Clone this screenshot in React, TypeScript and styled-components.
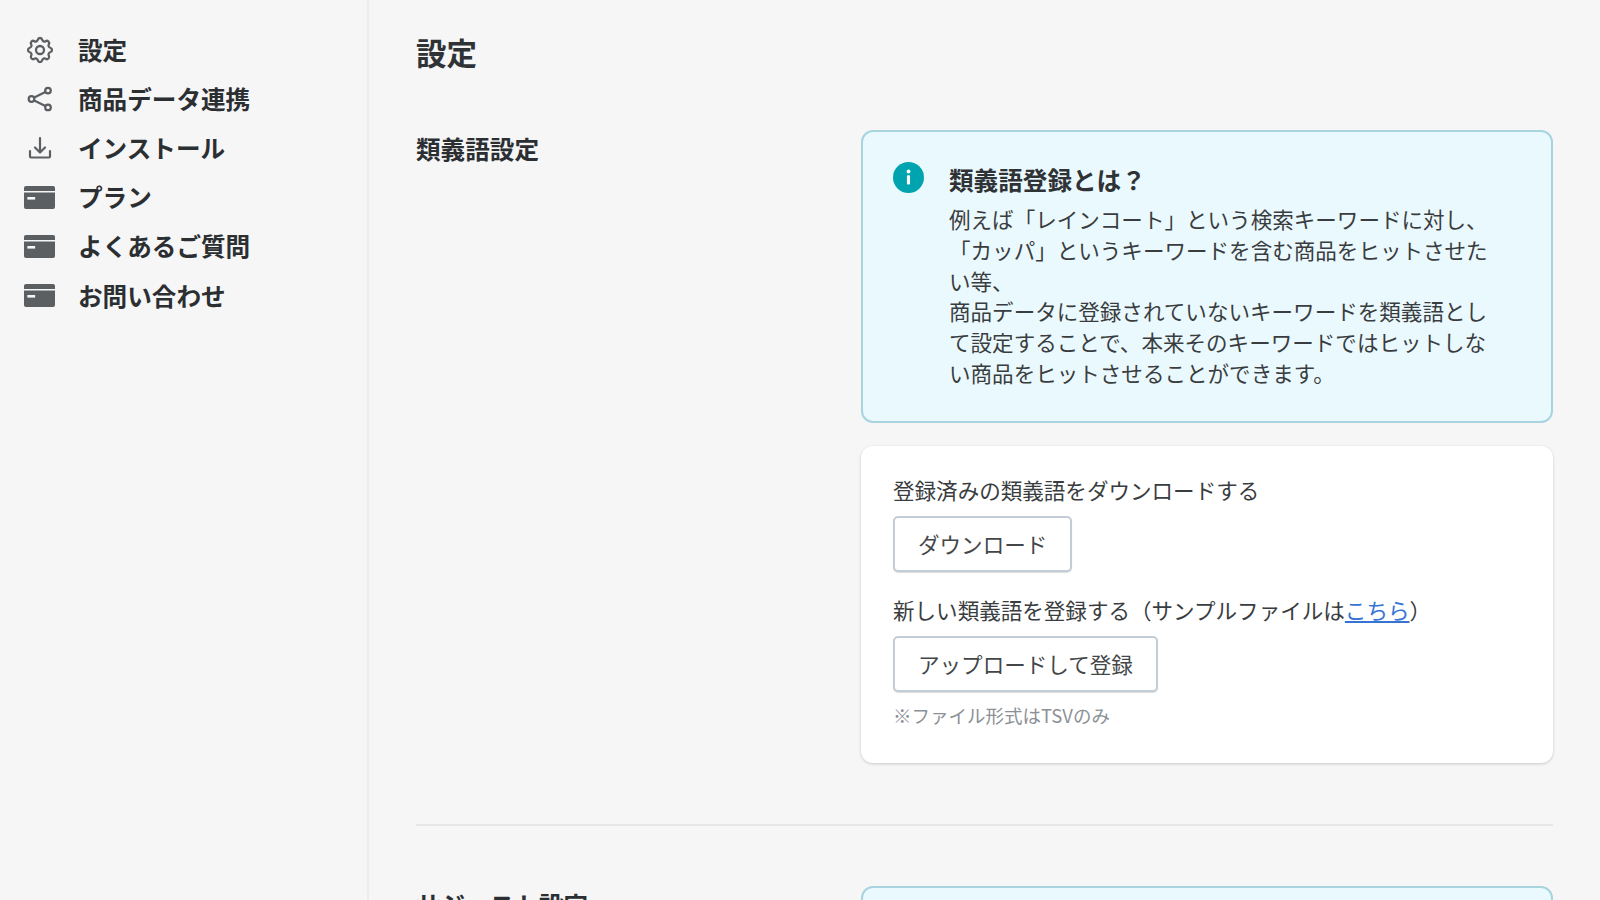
import { HiOutlineCog } from 'react-icons/hi';
import styled, { createGlobalStyle } from 'styled-components';

const CardIcon = () => (
  <SCardSvg viewBox="0 0 32 23" preserveAspectRatio="none">
    <path d="M2 0h28a2 2 0 0 1 2 2v3H0V2a2 2 0 0 1 2-2z" fill="#5c5f62" />
    <path d="M0 6.5h32V21a2 2 0 0 1-2 2H2a2 2 0 0 1-2-2z" fill="#5c5f62" />
    <rect x="3.5" y="11" width="8" height="2.6" fill="#f6f6f7" />
  </SCardSvg>
);

const ShareIcon = () => (
  <svg width="28" height="28" viewBox="0 0 28 28" fill="none" stroke="#5c5f62" strokeWidth="2.2">
    <circle cx="5.5" cy="14" r="2.8" />
    <circle cx="22" cy="5.6" r="2.8" />
    <circle cx="22" cy="22.4" r="2.8" />
    <path d="M8.2 12.6 19.4 7M8.2 15.4 19.4 21" />
  </svg>
);

const DownloadIcon = () => (
  <svg width="28" height="28" viewBox="0 0 28 28" fill="none" stroke="#5c5f62" strokeWidth="2.2" strokeLinecap="round" strokeLinejoin="round">
    <path d="M4 17v5.5a1 1 0 0 0 1 1h18a1 1 0 0 0 1-1V17" />
    <path d="M14 4v14M9 13.5l5 5 5-5" />
  </svg>
);

const InfoIcon = () => (
  <SInfoSvg viewBox="0 0 32 32">
    <circle cx="16" cy="16" r="16" fill="#00a4ae" />
    <circle cx="16" cy="9.8" r="2" fill="#fff" />
    <rect x="14.4" y="13.6" width="3.2" height="9.6" rx="1" fill="#fff" />
  </SInfoSvg>
);

export default function App() {
  const navItems = [
    { label: '設定', icon: <SCog /> },
    { label: '商品データ連携', icon: <ShareIcon /> },
    { label: 'インストール', icon: <DownloadIcon /> },
    { label: 'プラン', icon: <CardIcon /> },
    { label: 'よくあるご質問', icon: <CardIcon /> },
    { label: 'お問い合わせ', icon: <CardIcon /> },
  ];

  return (
    <>
      <GlobalStyle />
      <SPage>
        <SSidebar>
          {navItems.map((item) => (
            <SNavItem key={item.label}>
              <SNavIcon>{item.icon}</SNavIcon>
              {item.label}
            </SNavItem>
          ))}
        </SSidebar>
        <SMain>
          <SPageTitle>設定</SPageTitle>
          <SSection>
            <SSectionTitle>類義語設定</SSectionTitle>
            <SStack>
              <SBanner>
                <InfoIcon />
                <SBannerBody>
                  <SBannerTitle>類義語登録とは？</SBannerTitle>
                  <SBannerText>
                    例えば「レインコート」という検索キーワードに対し、
                    <br />
                    「カッパ」というキーワードを含む商品をヒットさせたい等、
                    <br />
                    商品データに登録されていないキーワードを類義語として設定することで、本来そのキーワードではヒットしない商品をヒットさせることができます。
                  </SBannerText>
                </SBannerBody>
              </SBanner>
              <SCard>
                <SLabel>登録済みの類義語をダウンロードする</SLabel>
                <SButton type="button">ダウンロード</SButton>
                <SLabel $spaced>
                  新しい類義語を登録する（サンプルファイルは<SLink href="#">こちら</SLink>）
                </SLabel>
                <SButton type="button">アップロードして登録</SButton>
                <SNote>※ファイル形式はTSVのみ</SNote>
              </SCard>
            </SStack>
          </SSection>
          <SDivider />
          <SSection>
            <SSectionTitle>サジェスト設定</SSectionTitle>
            <SStack>
              <SBanner>
                <InfoIcon />
              </SBanner>
            </SStack>
          </SSection>
        </SMain>
      </SPage>
    </>
  );
}

const GlobalStyle = createGlobalStyle`
  html, body {
    margin: 0;
    height: 100%;
    overflow: hidden;
    background: #f6f6f7;
  }

  body {
    color: #303336;
    font-family: "Noto Sans CJK JP", "Noto Sans", sans-serif;
  }
`;

const SPage = styled.div`
  display: flex;
  height: 900px;
  overflow: hidden;
`;

const SSidebar = styled.nav`
  box-sizing: border-box;
  flex: 0 0 369px;
  height: 100%;
  padding-top: 24px;
  border-right: 2px solid #ebecee;
`;

const SNavItem = styled.div`
  display: flex;
  align-items: center;
  height: 49.2px;
  padding-left: 24px;
  font-size: 24.6px;
  font-weight: 700;
  color: #2c2f32;
`;

const SNavIcon = styled.span`
  display: flex;
  justify-content: center;
  align-items: center;
  flex: 0 0 32px;
  margin-right: 22px;
  padding-top: 2px;
`;

const SCog = styled(HiOutlineCog)`
  width: 32px;
  height: 32px;
  color: #5c5f62;

  path {
    stroke-width: 1.7;
  }
`;

const SCardSvg = styled.svg`
  width: 31px;
  height: 23px;
  margin-right: 1px;
`;

const SMain = styled.main`
  flex: 1;
  min-width: 0;
  padding: 30px 47px 0;
`;

const SPageTitle = styled.h1`
  margin: 0 0 56px;
  font-size: 30.5px;
  font-weight: 700;
  line-height: 44px;
`;

const SSection = styled.section`
  display: grid;
  grid-template-columns: 445px 692px;
`;

const SSectionTitle = styled.h2`
  margin: 0;
  font-size: 24.6px;
  font-weight: 700;
  line-height: 36px;
  color: #2c2f32;
`;

const SStack = styled.div`
  display: flex;
  flex-direction: column;
  gap: 23px;
`;

const SBanner = styled.div`
  box-sizing: border-box;
  display: flex;
  gap: 25px;
  padding: 30px 32px 32px 30px;
  border: 2px solid #a7d4df;
  border-radius: 12px;
  background: #eaf9fd;
`;

const SInfoSvg = styled.svg`
  flex: 0 0 31px;
  width: 31px;
  height: 31px;
`;

const SBannerBody = styled.div`
  max-width: 545px;
`;

const SBannerTitle = styled.h3`
  margin: -1px 0 7px;
  font-size: 24.6px;
  font-weight: 700;
  line-height: 36px;
`;

const SBannerText = styled.p`
  margin: 0;
  font-size: 21.56px;
  line-height: 30.8px;
  color: #3a3d40;
`;

const SCard = styled.div`
  box-sizing: border-box;
  display: flex;
  flex-direction: column;
  align-items: flex-start;
  padding: 29px 32px 33px;
  border-radius: 12px;
  background: #fff;
  box-shadow: 0 1px 3px rgba(23, 24, 24, 0.2);
`;

const SLabel = styled.div<{ $spaced?: boolean }>`
  margin: ${(props) => (props.$spaced ? '23px' : '0')} 0 11px;
  font-size: 21.56px;
  line-height: 30px;
  color: #3a3d40;
`;

const SLink = styled.a`
  color: #3574d4;
  text-decoration: underline;
`;

const SButton = styled.button`
  box-sizing: border-box;
  height: 56px;
  padding: 0 23px;
  border: 2px solid #c4cdd5;
  border-radius: 5px;
  background: #fff;
  box-shadow: 0 1px 1px rgba(23, 24, 24, 0.15);
  font-family: inherit;
  font-size: 21.56px;
  color: #44474a;
`;

const SNote = styled.div`
  margin-top: 8px;
  font-size: 18.5px;
  line-height: 30px;
  color: #8c9196;
`;

const SDivider = styled.hr`
  height: 2px;
  margin: 61px 0 60px;
  border: 0;
  background: #e6e7e9;
`;
